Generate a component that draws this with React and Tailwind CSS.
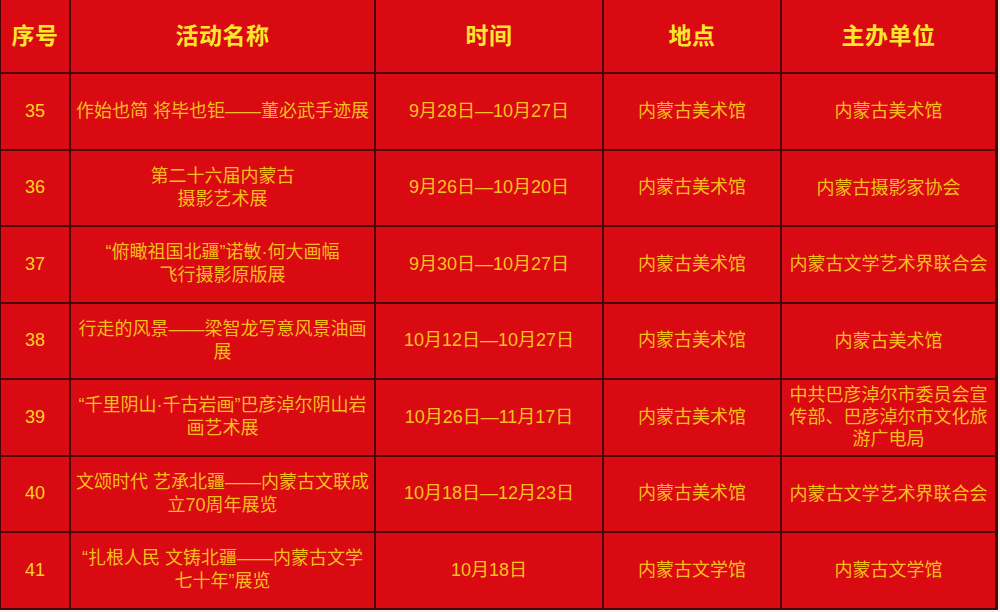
import React from 'react';

const rows = [
  { no: '35', name: ['作始也简 将毕也钜——董必武手迹展'], time: '9月28日—10月27日', place: '内蒙古美术馆', host: ['内蒙古美术馆'] },
  { no: '36', name: ['第二十六届内蒙古', '摄影艺术展'], time: '9月26日—10月20日', place: '内蒙古美术馆', host: ['内蒙古摄影家协会'] },
  { no: '37', name: ['“俯瞰祖国北疆”诺敏·何大画幅', '飞行摄影原版展'], time: '9月30日—10月27日', place: '内蒙古美术馆', host: ['内蒙古文学艺术界联合会'] },
  { no: '38', name: ['行走的风景——梁智龙写意风景油画', '展'], time: '10月12日—10月27日', place: '内蒙古美术馆', host: ['内蒙古美术馆'] },
  { no: '39', name: ['“千里阴山·千古岩画”巴彦淖尔阴山岩', '画艺术展'], time: '10月26日—11月17日', place: '内蒙古美术馆', host: ['中共巴彦淖尔市委员会宣', '传部、巴彦淖尔市文化旅', '游广电局'] },
  { no: '40', name: ['文颂时代 艺承北疆——内蒙古文联成', '立70周年展览'], time: '10月18日—12月23日', place: '内蒙古美术馆', host: ['内蒙古文学艺术界联合会'] },
  { no: '41', name: ['“扎根人民 文铸北疆——内蒙古文学', '七十年”展览'], time: '10月18日', place: '内蒙古文学馆', host: ['内蒙古文学馆'] },
];

const headers = ['序号', '活动名称', '时间', '地点', '主办单位'];

const Lines = ({ lines }) => (
  <div className="flex flex-col items-center">
    {lines.map((l, i) => (
      <span key={i} className="whitespace-nowrap">{l}</span>
    ))}
  </div>
);

export default function App() {
  const cell = 'bg-[#d90a12] flex items-center justify-center text-center overflow-hidden';
  return (
    <div
      className="w-[1000px] h-[612px] bg-[#f4f4f4] overflow-hidden"
      style={{ fontFamily: '"Liberation Sans", "Noto Sans CJK SC", sans-serif' }}
    >
      <div className="w-[998px] bg-[#4a0606] pl-[1px] pr-[3px] pb-[2px] grid grid-cols-[68px_303px_226px_176px_213px] grid-rows-[72px_repeat(7,74.5px)] gap-[2px]">
        {headers.map((h) => (
          <div key={h} className={`${cell} text-[23px] font-bold text-[#ffe62e] tracking-[0.5px]`}>
            {h}
          </div>
        ))}
        {rows.map((r) => (
          <React.Fragment key={r.no}>
            <div className={`${cell} text-[18px] text-[#ffd21f]`}>{r.no}</div>
            <div className={`${cell} text-[18px] leading-[23px] text-[#f8bd1c]`}>
              <Lines lines={r.name} />
            </div>
            <div className={`${cell} text-[18px] text-[#f8c21c]`}>{r.time}</div>
            <div className={`${cell} text-[18px] text-[#f8bd1c]`}>{r.place}</div>
            <div className={`${cell} text-[18px] leading-[22px] text-[#f8bd1c]`}>
              <Lines lines={r.host} />
            </div>
          </React.Fragment>
        ))}
      </div>
    </div>
  );
}
